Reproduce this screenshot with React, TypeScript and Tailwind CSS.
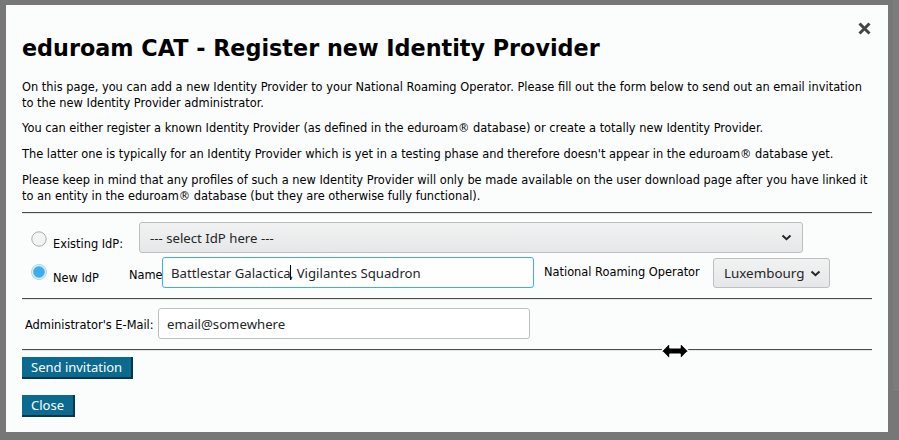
import type { ReactNode } from "react";

const body = "font-['DejaVu_Sans','Verdana',sans-serif]";
const ctl = "font-['Noto_Sans','Open_Sans',sans-serif]";

function Chevron() {
  return (
    <svg width="11" height="7" viewBox="0 0 11 7" aria-hidden>
      <path d="M1.5 1.5 L5.5 5.2 L9.5 1.5" fill="none" stroke="#232629" strokeWidth="2" />
    </svg>
  );
}

function Radio({ checked }: { checked?: boolean }) {
  return (
    <svg width="16" height="16" viewBox="0 0 16 16" aria-hidden>
      {checked ? (
        <>
          <circle cx="8" cy="8" r="7.6" fill="#d3ecf9" stroke="#9fd3f2" strokeWidth="0.8" />
          <circle cx="8" cy="8" r="5.8" fill="#3daee9" />
        </>
      ) : (
        <circle cx="8" cy="8" r="7.2" fill="#f2f3f3" stroke="#a9abad" strokeWidth="1" />
      )}
    </svg>
  );
}

function Rule({ className = "" }: { className?: string }) {
  return <div className={`h-[2px] border-t border-[#4b4b4b] border-b border-b-[#e4e6e6] ${className}`} />;
}

function Button({ children, className = "" }: { children: ReactNode; className?: string }) {
  return (
    <div
      className={`${ctl} h-[22px] self-start flex items-center px-[9px] bg-[#0b6a8f] text-white text-[13px] leading-none border-r-2 border-b-2 border-[#06384c] ${className}`}
    >
      {children}
    </div>
  );
}

function DoubleArrowCursor() {
  return (
    <svg width="30" height="20" viewBox="0 0 30 20" className="absolute left-[654px] top-[336px]" aria-hidden>
      <polygon
        points="1.5,10 10,1.5 10,6.8 20,6.8 20,1.5 28.5,10 20,18.5 20,13.2 10,13.2 10,18.5"
        fill="#000"
        stroke="#fff"
        strokeWidth="1.6"
        strokeLinejoin="round"
      />
    </svg>
  );
}

export default function App() {
  return (
    <div className="w-[899px] h-[440px] bg-[#777777] flex overflow-hidden">
      <div className={`${body} relative ml-[6px] mt-[5px] w-[882px] h-[427px] bg-[#fbfcfc] px-4 pt-[30px] text-black flex flex-col`}>
        <svg width="13" height="13" viewBox="0 0 13 13" className="absolute top-[17px] right-[17px]" aria-hidden>
          <path d="M1.5 1.5 L11.5 11.5 M11.5 1.5 L1.5 11.5" stroke="#454545" strokeWidth="3" />
        </svg>

        <h1 className="text-[22.3px] leading-[26px] font-bold">eduroam CAT - Register new Identity Provider</h1>

        <div className="mt-[18px] text-[11.4px] leading-4">
          <p className="mb-[9px]">
            On this page, you can add a new Identity Provider to your National Roaming Operator. Please fill out the form below to send out an email invitation to the new Identity Provider administrator.
          </p>
          <p className="mb-[10px]">
            You can either register a known Identity Provider (as defined in the eduroam® database) or create a totally new Identity Provider.
          </p>
          <p className="mb-[10px]">
            The latter one is typically for an Identity Provider which is yet in a testing phase and therefore doesn't appear in the eduroam® database yet.
          </p>
          <p>
            Please keep in mind that any profiles of such a new Identity Provider will only be made available on the user download page after you have linked it to an entity in the eduroam® database (but they are otherwise fully functional).
          </p>
        </div>

        <Rule className="mt-[8px]" />

        {/* existing idp */}
        <div className="mt-[8px] flex items-start text-[11.4px] leading-4">
          <div className="ml-[9px] mt-[9px] w-4 h-4"><Radio /></div>
          <span className="ml-[6px] mt-[14px] w-[86px]">Existing IdP:</span>
          <div className={`${ctl} w-[664px] h-[31px] rounded-[3px] border border-[#bcbebf] bg-gradient-to-b from-[#f1f2f2] to-[#e6e7e8] flex items-center justify-between pl-[10px] pr-[10px] text-[13.2px] text-[#232629]`}>
            <span>--- select IdP here ---</span>
            <Chevron />
          </div>
        </div>

        {/* new idp */}
        <div className="mt-[4px] flex items-start text-[11.4px] leading-4">
          <div className="ml-[9px] mt-[7px] w-4 h-4"><Radio checked /></div>
          <span className="ml-[6px] mt-[13px] w-[76px]">New IdP</span>
          <span className="mt-[10px] w-[33px]">Name</span>
          <div className={`${ctl} w-[372px] h-[31px] rounded-[3px] border border-[#3daee9] bg-white flex items-center pl-[8px] text-[13.2px] text-[#232629]`}>
            <span>Battlestar Galactica</span>
            <span className="w-px h-[15px] bg-black -mx-px" />
            <span>, Vigilantes Squadron</span>
          </div>
          <span className="ml-[10px] mt-[7px] w-[169px]">National Roaming Operator</span>
          <div className={`${ctl} mt-px w-[117px] h-[30px] rounded-[3px] border border-[#bcbebf] bg-gradient-to-b from-[#f1f2f2] to-[#e6e7e8] flex items-center gap-[6px] pl-[10px] text-[13.4px] text-[#232629]`}>
            <span>Luxembourg</span>
            <Chevron />
          </div>
        </div>

        <Rule className="mt-[10px]" />

        {/* admin email */}
        <div className="mt-[8px] flex items-start text-[11.4px] leading-4">
          <span className="ml-[3px] mt-[9px] w-[133px]">Administrator's E-Mail:</span>
          <div className={`${ctl} w-[372px] h-[31px] rounded-[3px] border border-[#bcbebf] bg-white flex items-center pl-[8px] text-[13.2px] text-[#232629]`}>
            email@somewhere
          </div>
        </div>

        <Rule className="mt-[10px]" />

        <Button className="mt-[6px]">Send invitation</Button>
        <Button className="mt-[16px]">Close</Button>

        <DoubleArrowCursor />
      </div>
      <div className="w-[5px]" />
      <div className="w-[6px] h-[392px] bg-[#7c7c7c] border-b border-[#727272]" />
    </div>
  );
}
